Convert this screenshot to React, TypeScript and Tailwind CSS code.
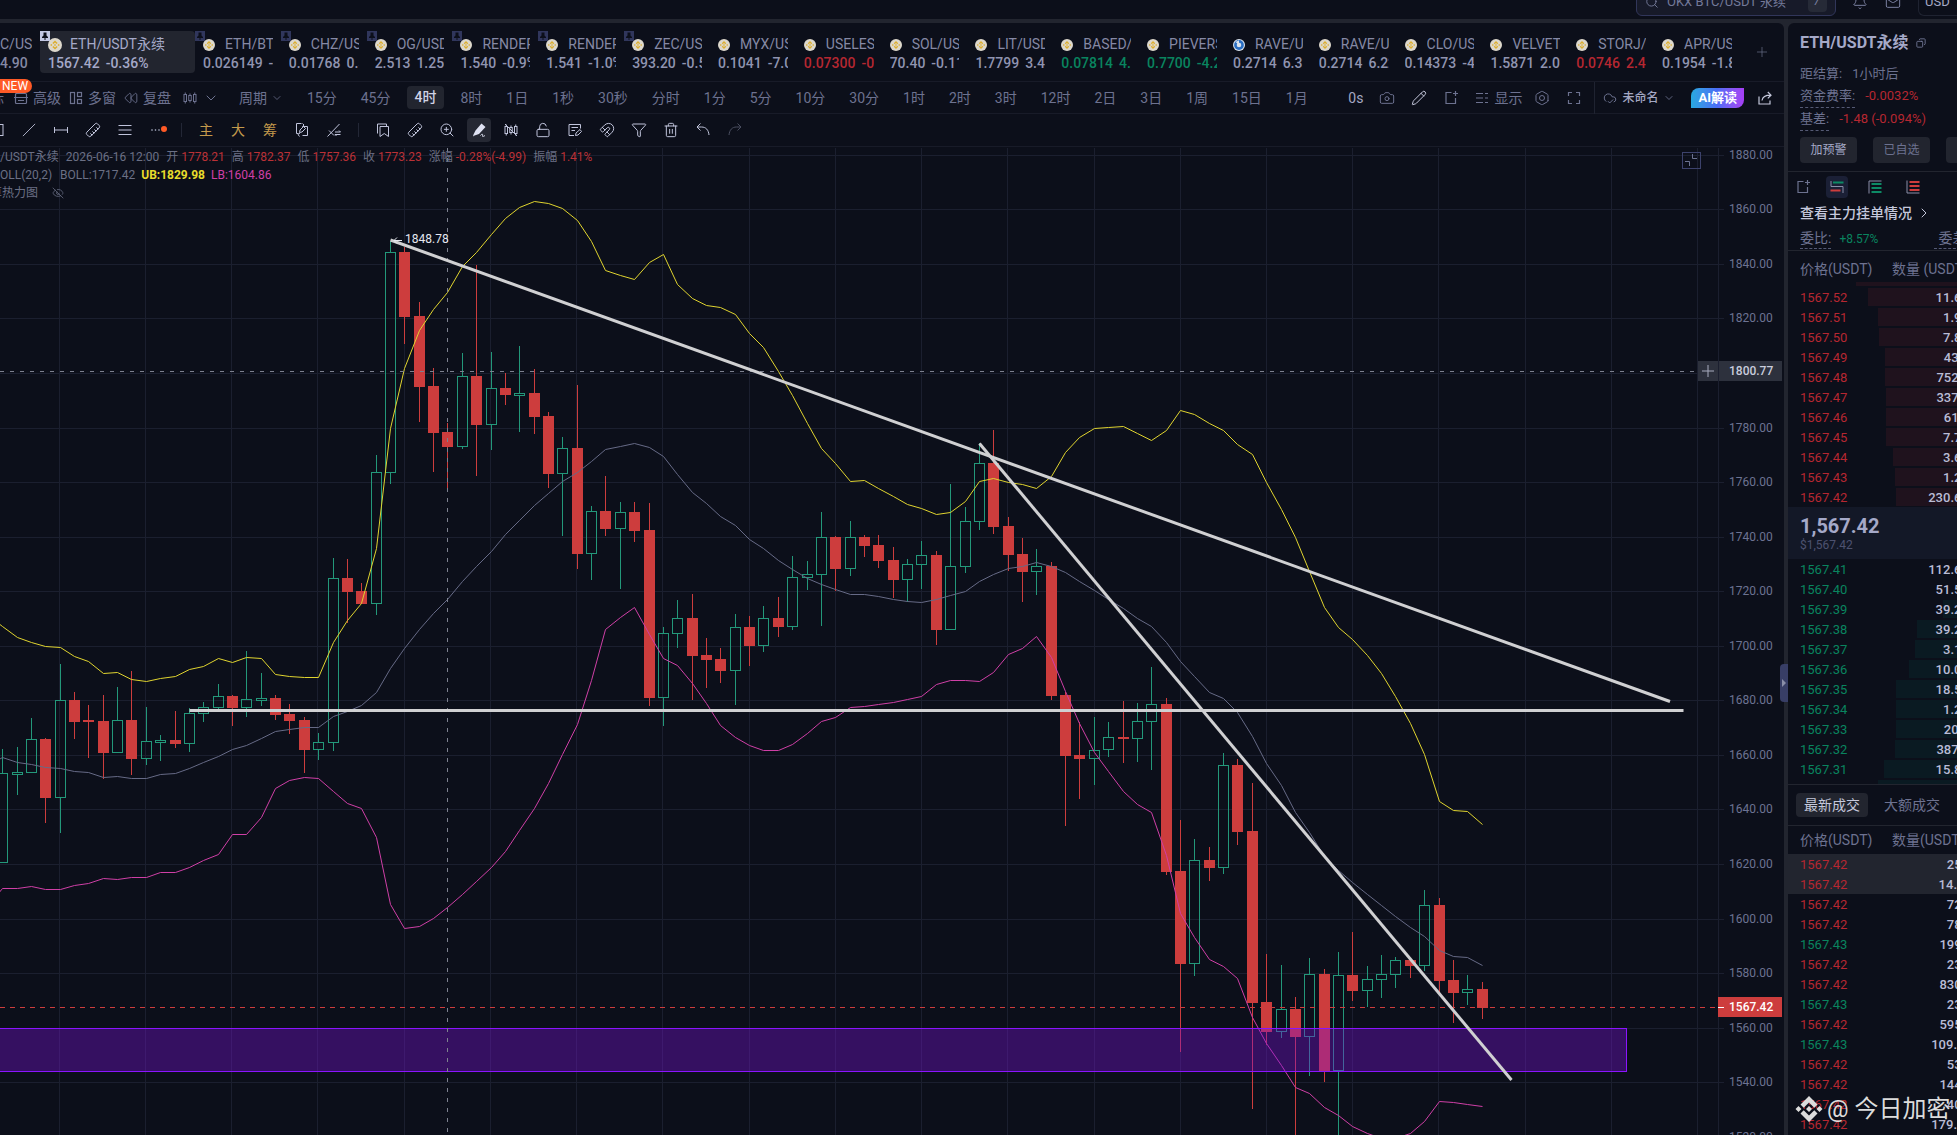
import { useState } from 'react';
import type { ReactNode } from 'react';
import {
  Bell,
  Camera,
  ChevronDown,
  ChevronRight,
  CloudCheck,
  Copy,
  EyeOff,
  Filter,
  Fullscreen,
  Hexagon,
  LockOpen,
  Magnet,
  Mail,
  NotebookPen,
  Pencil,
  Plus,
  Rewind,
  Ruler,
  Search,
  Slash,
  SquarePen,
  Trash2,
  ZoomIn,
} from 'lucide-react';

type Tone = 'up' | 'down' | 'flat';

interface Ticker {
  name: string;
  price: string;
  change: string;
  tone?: Tone;
  pinned?: boolean;
  blue?: boolean;
}

const TICKERS: Ticker[] = [
  { name: 'ETH/BTC', price: '0.026149', change: '-0.2', pinned: true },
  { name: 'CHZ/USDT', price: '0.01768', change: '0.5', pinned: true },
  { name: 'OG/USDT', price: '2.513', change: '1.25%', pinned: true },
  { name: 'RENDER/U', price: '1.540', change: '-0.9%', pinned: true },
  { name: 'RENDER/U', price: '1.541', change: '-1.0%', pinned: true },
  { name: 'ZEC/USDT', price: '393.20', change: '-0.5', pinned: true },
  { name: 'MYX/USDT', price: '0.1041', change: '-7.0' },
  { name: 'USELESS', price: '0.07300', change: '-0', tone: 'down' },
  { name: 'SOL/USDT', price: '70.40', change: '-0.11' },
  { name: 'LIT/USDT', price: '1.7799', change: '3.44' },
  { name: 'BASED/U', price: '0.07814', change: '4.1', tone: 'up' },
  { name: 'PIEVERSE', price: '0.7700', change: '-4.2', tone: 'up' },
  { name: 'RAVE/US', price: '0.2714', change: '6.31', blue: true },
  { name: 'RAVE/US', price: '0.2714', change: '6.22' },
  { name: 'CLO/USDT', price: '0.14373', change: '-4' },
  { name: 'VELVET/U', price: '1.5871', change: '2.05' },
  { name: 'STORJ/US', price: '0.0746', change: '2.40', tone: 'down' },
  { name: 'APR/USDT', price: '0.1954', change: '-1.8' },
];

const PERIODS = [
  '15分', '45分', '4时', '8时', '1日', '1秒', '30秒', '分时', '1分', '5分', '10分', '30分',
  '1时', '2时', '3时', '12时', '2日', '3日', '1周', '15日', '1月',
];

// price, amount, left edge of the depth bar
const ASKS: [string, string, number][] = [
  ['1567.52', '11.65K', 80],
  ['1567.51', '1.92K', 90],
  ['1567.50', '7.84K', 91],
  ['1567.49', '43.89', 97],
  ['1567.48', '752.39', 97],
  ['1567.47', '337.01', 98],
  ['1567.46', '61.13', 98],
  ['1567.45', '7.72K', 98],
  ['1567.44', '3.65K', 105],
  ['1567.43', '1.23K', 107],
  ['1567.42', '230.61K', 108],
];

const BIDS: [string, string, number][] = [
  ['1567.41', '112.60K', 200],
  ['1567.40', '51.53K', 180],
  ['1567.39', '39.21K', 155],
  ['1567.38', '39.27K', 129],
  ['1567.37', '3.13K', 127],
  ['1567.36', '10.03K', 121],
  ['1567.35', '18.51K', 108],
  ['1567.34', '1.25K', 108],
  ['1567.33', '20.38', 108],
  ['1567.32', '387.15', 107],
  ['1567.31', '15.80K', 96],
];

const TRADES: [string, string, Tone][] = [
  ['1567.42', '25.08', 'down'],
  ['1567.42', '14.91K', 'down'],
  ['1567.42', '72.10', 'down'],
  ['1567.42', '78.37', 'down'],
  ['1567.43', '199.06', 'up'],
  ['1567.42', '23.51', 'down'],
  ['1567.42', '830.73', 'down'],
  ['1567.43', '23.51', 'up'],
  ['1567.42', '595.62', 'down'],
  ['1567.43', '109.72K', 'up'],
  ['1567.42', '53.29', 'down'],
  ['1567.42', '144.20', 'down'],
  ['1567.42', '40.75', 'down'],
  ['1567.42', '179.50K', 'down'],
];

const FIRST = -4;
const candleX = (i: number) => Math.floor(60.1 + 14.364 * i) + 0.5;

// [up?, high, body top, body bottom, low], one per 4h bar
const CANDLES: [0 | 1, number, number, number, number][] = [
  [1, 749, 773, 862, 863], [1, 747, 772, 774, 795], [1, 718, 739, 772, 773], [0, 738, 739, 798, 823],
  [1, 664, 700, 797, 833], [0, 692, 700, 722, 739], [0, 705, 720, 722, 758], [0, 695, 721, 753, 779],
  [1, 687, 720, 752, 753], [0, 671, 720, 759, 775], [1, 707, 741, 758, 765], [1, 735, 740, 742, 761],
  [0, 711, 740, 744, 748], [1, 708, 713, 743, 752], [1, 702, 707, 713, 722], [1, 684, 696, 707, 712],
  [0, 695, 696, 708, 726], [1, 651, 699, 707, 717], [1, 673, 698, 700, 706], [0, 695, 698, 715, 720],
  [0, 704, 714, 721, 734], [0, 717, 720, 750, 773], [1, 733, 742, 749, 760], [1, 558, 578, 742, 751],
  [0, 559, 578, 592, 623], [0, 583, 591, 604, 604], [1, 455, 472, 603, 615], [1, 241, 252, 472, 484],
  [0, 247, 252, 317, 344], [0, 302, 316, 387, 422], [0, 368, 386, 433, 472], [0, 423, 432, 447, 492],
  [1, 353, 376, 446, 449], [0, 265, 376, 425, 476], [1, 352, 388, 424, 450], [0, 373, 388, 395, 405],
  [1, 346, 393, 395, 432], [0, 369, 393, 417, 434], [0, 412, 416, 474, 488], [1, 437, 448, 473, 536],
  [0, 385, 448, 554, 569], [1, 506, 511, 553, 580], [0, 476, 511, 529, 536], [1, 502, 512, 528, 589],
  [0, 502, 512, 531, 542], [0, 503, 530, 698, 706], [1, 627, 633, 697, 726], [1, 600, 618, 633, 648],
  [0, 594, 618, 656, 700], [0, 638, 655, 660, 688], [0, 648, 659, 671, 683], [1, 614, 627, 670, 705],
  [0, 616, 627, 646, 666], [1, 606, 618, 645, 652], [0, 597, 618, 627, 637], [1, 556, 577, 626, 630],
  [1, 561, 574, 577, 590], [1, 512, 537, 574, 626], [0, 536, 537, 569, 591], [1, 521, 537, 568, 576],
  [0, 535, 537, 546, 557], [0, 535, 545, 561, 568], [0, 547, 560, 580, 598], [1, 559, 564, 579, 602],
  [1, 541, 555, 564, 589], [0, 551, 555, 630, 645], [1, 484, 566, 629, 630], [1, 507, 521, 566, 573],
  [1, 443, 463, 521, 530], [0, 430, 463, 527, 534], [0, 517, 526, 555, 571], [0, 538, 554, 572, 602],
  [1, 549, 566, 571, 595], [0, 562, 566, 696, 700], [0, 692, 695, 756, 826], [0, 722, 755, 759, 799],
  [1, 717, 750, 758, 785], [1, 722, 737, 749, 757], [0, 701, 737, 739, 763], [1, 703, 721, 738, 762],
  [1, 667, 704, 721, 770], [0, 698, 704, 872, 875], [0, 820, 871, 964, 1052], [1, 839, 860, 963, 976],
  [0, 847, 860, 868, 881], [1, 753, 765, 867, 874], [0, 759, 765, 832, 845], [0, 783, 831, 1003, 1109],
  [0, 954, 1002, 1032, 1045], [1, 965, 1009, 1031, 1038], [0, 997, 1009, 1037, 1140], [1, 958, 974, 1036, 1076],
  [0, 969, 974, 1071, 1082], [1, 952, 975, 1070, 1140], [0, 932, 975, 991, 1001], [1, 966, 979, 990, 1007],
  [1, 955, 974, 979, 998], [1, 957, 960, 974, 988], [0, 960, 960, 966, 978], [1, 890, 905, 965, 971],
  [0, 898, 905, 981, 992], [0, 960, 980, 993, 1023], [1, 975, 989, 992, 1005], [0, 982, 989, 1008, 1019],
];

// Bollinger bands, starting one bar before the first candle
const UPPER = [
  615, 626, 637, 642, 646, 647, 656, 661, 673, 672, 679, 681, 678, 676, 669, 666, 658, 662, 657, 658, 674, 676,
  677, 677, 642, 620, 603, 548, 428, 368, 330, 309, 292, 266, 252, 234, 218, 207, 201, 203, 208, 220, 241, 270,
  275, 279, 262, 254, 284, 298, 305, 307, 314, 333, 347, 371, 395, 423, 448, 463, 481, 480, 488, 496, 504, 508,
  514, 512, 501, 481, 478, 482, 484, 488, 476, 452, 437, 428, 427, 426, 433, 440, 430, 410, 414, 423, 430, 444,
  454, 482, 509, 537, 571, 607, 627, 639, 655, 673, 696, 723, 754, 801, 810, 811, 824,
];
const MIDDLE = [
  765, 757, 762, 764, 767, 768, 771, 772, 777, 776, 778, 778, 774, 773, 768, 762, 756, 749, 745, 738, 731, 729,
  727, 727, 716, 711, 705, 692, 668, 648, 629, 613, 599, 581, 566, 551, 534, 520, 505, 493, 481, 472, 461, 449,
  446, 443, 447, 456, 474, 492, 503, 516, 525, 539, 548, 560, 569, 578, 584, 589, 594, 594, 596, 599, 601, 602,
  599, 595, 591, 581, 574, 568, 566, 562, 566, 572, 581, 590, 599, 608, 618, 626, 642, 661, 676, 692, 698, 712,
  736, 763, 785, 812, 832, 856, 870, 882, 894, 905, 916, 927, 936, 950, 956, 957, 965,
];
const LOWER = [
  905, 888, 888, 886, 889, 889, 885, 883, 878, 879, 877, 877, 872, 872, 867, 860, 854, 834, 834, 817, 788, 780,
  777, 778, 791, 803, 808, 837, 904, 928, 926, 918, 907, 894, 881, 867, 851, 830, 808, 783, 754, 724, 680, 629,
  617, 607, 634, 658, 665, 683, 703, 725, 737, 745, 750, 750, 744, 733, 721, 717, 707, 706, 704, 702, 699, 696,
  684, 680, 680, 681, 672, 654, 648, 636, 657, 691, 723, 752, 771, 791, 804, 812, 855, 913, 937, 959, 966, 978,
  1017, 1043, 1065, 1087, 1093, 1107, 1115, 1126, 1133, 1138, 1138, 1133, 1121, 1101, 1102, 1104, 1106,
];

const toPoints = (ys: number[]) =>
  ys.map((y, i) => `${candleX(FIRST - 1 + i)},${y + 0.5}`).join(' ');

const GRID_X = Array.from({ length: 20 }, (_, i) => Math.floor(59.3 + 86.23 * i) + 0.5);
const GRID_Y = Array.from({ length: 19 }, (_, i) => ({
  y: Math.floor(155.3 + 54.55 * i) + 0.5,
  label: (1880 - 20 * i).toFixed(2),
}));

function toneClass(tone: Tone = 'flat') {
  if (tone === 'up') return 'text-[#09845f]';
  if (tone === 'down') return 'text-[#b62731]';
  return 'text-[#9094b0]';
}

function Coin({ blue, size }: { blue?: boolean; size: string }) {
  if (blue) {
    return (
      <svg viewBox="0 0 14 14" className={size}>
        <circle cx="7" cy="7" r="7" fill="#d9e2ee" />
        <circle cx="7" cy="7" r="4.2" fill="none" stroke="#2a6fc4" strokeWidth="3" />
        <path d="M7 7V1.5L3 3.500z" fill="#d9e2ee" />
      </svg>
    );
  }
  return (
    <svg viewBox="0 0 14 14" className={size}>
      <circle cx="7" cy="7" r="7" fill="#ddd8cc" />
      <path d="M7 2.4 9.6 5 8.5 6.1 7 4.6 5.5 6.1 4.4 5z" fill="#dcae2e" />
      <path d="M7 11.6 9.6 9 8.5 7.9 7 9.4 5.5 7.9 4.4 9z" fill="#dcae2e" />
      <path d="M7 5.9 8.1 7 7 8.1 5.9 7z M3.3 5.9 4.4 7 3.3 8.1 2.2 7z M10.7 5.9 11.8 7 10.7 8.1 9.6 7z" fill="#dcae2e" />
    </svg>
  );
}

function Pin({ active }: { active?: boolean }) {
  return (
    <svg viewBox="0 0 10 10" className="absolute left-0 top-0 size-2.5">
      <rect width="10" height="10" fill={active ? '#c3c8e4' : '#30365c'} />
      <path d="M3.500 1.500h3v3l1.500 1.500v1H5.500V9h-1V7H2V6l1.500-1.500z" fill="#0c0f1a" />
    </svg>
  );
}

function CandlesIcon({ crossed }: { crossed?: boolean }) {
  return (
    <svg viewBox="0 0 14 14" className="size-3.5" fill="none" stroke="currentColor">
      <rect x="1" y="3.500" width="2.500" height="7" />
      <rect x="5.750" y="4.500" width="2.500" height="5" />
      <rect x="10.500" y="3.500" width="2.500" height="7" />
      <path d="M2.250 1.500v2M2.250 10.500v2M7 2.500v2M7 9.500v2M11.750 1.500v2M11.750 10.500v2" />
      {crossed && <path d="M1 1l12 12" />}
    </svg>
  );
}

function PopOutIcon() {
  return (
    <svg viewBox="0 0 16 16" className="size-4" fill="none" stroke="currentColor" strokeWidth="1.200">
      <path d="M8.500 2.500H3v11h9.500V8M12.500 1v5M10 3.500h5" />
    </svg>
  );
}

function ToolButton({ label, active, children }: { label: string; active?: boolean; children: ReactNode }) {
  return (
    <button
      aria-label={label}
      className={`flex size-6 shrink-0 items-center justify-center rounded text-sm ${
        active ? 'bg-[#252833] text-[#dfe2f2]' : ''
      }`}
    >
      {children}
    </button>
  );
}

function Header() {
  return (
    <header className="flex h-[19px] shrink-0 items-end justify-end overflow-hidden bg-[#0c0f1a] pb-[3px] text-[13px] text-[#7a80a0]">
      <label className="flex h-7 w-[200px] items-center gap-2 rounded-md border border-[#31365a] bg-[#171a29] px-2">
        <Search className="size-3.5 shrink-0" strokeWidth={1.5} />
        <input
          aria-label="搜索"
          placeholder="OKX BTC/USDT 永续"
          className="min-w-0 flex-1 bg-transparent outline-none placeholder:text-[#737999]"
        />
        <kbd className="rounded-sm bg-[#262a37] px-1.5 text-xs leading-5">/</kbd>
      </label>
      <button aria-label="通知" className="flex h-7 w-12 items-center justify-center">
        <Bell className="size-4" strokeWidth={1.5} />
      </button>
      <button aria-label="消息" className="flex h-7 w-[18px] items-center justify-center">
        <Mail className="size-4" strokeWidth={1.5} />
      </button>
      <button className="ml-4 h-7 w-[39px] rounded-l-md border border-r-0 border-[#1f2331] pl-1.5 text-left text-[#a4a8c4]">
        USD
      </button>
    </header>
  );
}

function TickerTabs() {
  return (
    <nav className="flex h-[59px] shrink-0 items-center border-b border-[#181b28] text-sm leading-[19px] whitespace-nowrap">
      <button className="flex h-[42px] w-10 shrink-0 flex-col justify-end overflow-hidden pr-2 text-left text-[#8589a5]">
        <span className="w-full overflow-hidden">C/USDT</span>
        <span className="flex w-full gap-1.5 overflow-hidden font-medium">
          <span>4.90</span>
          <span>-0.8</span>
        </span>
      </button>
      <button className="relative flex h-[42px] w-[155px] shrink-0 flex-col justify-end rounded bg-[#22252f] px-2 text-left text-[#a5a9c8]">
        <Pin active />
        <span className="flex items-center gap-2">
          <Coin size="size-3.5" />
          ETH/USDT永续
        </span>
        <span className="flex gap-1.5 font-medium">
          <span>1567.42</span>
          <span>-0.36%</span>
        </span>
      </button>
      <div className="flex min-w-0 flex-1">
        {TICKERS.map((t, i) => (
          <button key={i} className="relative flex h-[42px] min-w-0 flex-1 flex-col justify-end px-2 text-left">
            {t.pinned && <Pin />}
            <span className="flex w-full items-center gap-2.5 overflow-hidden text-[#8589a5]">
              <Coin size="size-3 shrink-0" blue={t.blue} />
              <span className="overflow-hidden">{t.name}</span>
            </span>
            <span className={`flex w-full gap-1.5 overflow-hidden font-medium ${toneClass(t.tone)}`}>
              <span>{t.price}</span>
              <span>{t.change}</span>
            </span>
          </button>
        ))}
      </div>
      <button aria-label="添加" className="flex w-11 shrink-0 justify-center text-[#6d7290]">
        <Plus className="size-4" strokeWidth={1} />
      </button>
    </nav>
  );
}

function PeriodBar() {
  const [period, setPeriod] = useState('4时');

  return (
    <div className="relative flex h-8 shrink-0 items-center border-b border-[#181b28] text-sm whitespace-nowrap text-[#6d7290]">
      <span className="absolute -top-[3px] left-0 rounded-r-full rounded-tl-lg bg-[#ff5a26] pl-0.5 pr-1 text-xs leading-[14px] text-white">
        NEW
      </span>
      <span className="mr-2.5 flex w-1 justify-end overflow-hidden">标</span>
      <button className="mr-2 flex items-center gap-[5px]">
        <svg viewBox="0 0 14 14" className="size-3.5" fill="none" stroke="currentColor" strokeWidth="1.200">
          <rect x="1.500" y="2.500" width="11" height="10" rx="1" />
          <path d="M0 6.500h14M4 .5v2M10 .5v2M4 9.500h6" />
        </svg>
        高级
      </button>
      <button className="mr-2 flex items-center gap-[5px]">
        <svg viewBox="0 0 14 14" className="size-3.5" fill="none" stroke="currentColor" strokeWidth="1.200">
          <rect x="1.500" y="1.500" width="4" height="11" />
          <rect x="8.500" y="1.500" width="4" height="4" />
          <rect x="8.500" y="8.500" width="4" height="4" />
        </svg>
        多窗
      </button>
      <button className="mr-3 flex items-center gap-[5px]">
        <Rewind className="size-3.5" strokeWidth={1.5} />
        复盘
      </button>
      <button aria-label="图表类型" className="mr-5 flex items-center gap-1.5">
        <CandlesIcon />
        <ChevronDown className="size-4" strokeWidth={1.5} />
      </button>
      <button className="mr-3 flex items-center gap-1">
        周期
        <ChevronDown className="size-3" strokeWidth={1.5} />
      </button>
      {PERIODS.map((p) => (
        <button
          key={p}
          onClick={() => setPeriod(p)}
          className={p === period ? 'mx-1 rounded bg-[#22252f] px-2 leading-[23px] font-medium text-[#d0d3e6]' : 'px-3'}
        >
          {p}
        </button>
      ))}
      <div className="ml-auto flex items-center gap-4 pr-3">
        <span className="text-[#a4a8c4]">0s</span>
        <button aria-label="截图"><Camera className="size-4" strokeWidth={1.5} /></button>
        <button aria-label="画线" className="text-[#c5c8dc]"><Pencil className="size-4" strokeWidth={1.5} /></button>
        <button aria-label="新窗口"><PopOutIcon /></button>
        <button className="-mr-1 flex items-center gap-[5px]">
          <svg viewBox="0 0 14 14" className="size-3.5" stroke="currentColor" strokeWidth="1.200">
            <path d="M1 2.500h7M1 7h7M1 11.500h7M10 2.500h3M10 7h3M10 11.500h3" />
          </svg>
          显示
        </button>
        <button aria-label="设置" className="relative">
          <Hexagon className="size-4" strokeWidth={1.5} />
          <span className="absolute inset-0 m-auto size-1.5 rounded-full border border-current" />
        </button>
        <button aria-label="全屏">
          <svg viewBox="0 0 16 16" className="size-4" fill="none" stroke="currentColor" strokeWidth="1.200">
            <path d="M2.500 6V2.500H6M10 2.500h3.500V6M13.500 10v3.500H10M6 13.500H2.500V10" />
          </svg>
        </button>
        <div className="-ml-1 flex h-8 items-center border-l border-[#1f2331] pl-2">
          <button className="flex items-center gap-[5px] text-xs font-medium text-[#a4a8c4]">
            <CloudCheck className="size-3.5 text-[#7a80a0]" strokeWidth={1.5} />
            未命名
            <ChevronDown className="size-3 text-[#7a80a0]" strokeWidth={1.5} />
          </button>
        </div>
        <button className="rounded-tl-lg rounded-br-lg bg-linear-to-r from-[#27a9e0] via-[#4a6cf5] to-[#a63df5] px-[7px] text-[13px] leading-5 font-bold text-white">
          AI解读
        </button>
        <button aria-label="分享" className="-ml-0.5 text-[#c5c8dc]">
          <svg viewBox="0 0 14 14" className="size-3.5" fill="none" stroke="currentColor" strokeWidth="1.200">
            <path d="M1 5.500v7.500h11V9.500M4 9.500C4.500 6 7 4.200 12.500 4.200M9.800 1l3.200 3.200-3.200 3.200" />
          </svg>
        </button>
      </div>
    </div>
  );
}

function DrawBar() {
  return (
    <div className="flex h-[33px] shrink-0 items-center gap-2 border-b border-[#181b28] text-[#c0c4db]">
      <div className="-ml-[15px]">
        <ToolButton label="矩形">
          <svg viewBox="0 0 16 16" className="size-4" fill="none" stroke="currentColor">
            <rect x="2" y="2.500" width="12" height="11" />
          </svg>
        </ToolButton>
      </div>
      <ToolButton label="线段"><Slash className="size-3.5" strokeWidth={1.5} /></ToolButton>
      <ToolButton label="水平线">
        <svg viewBox="0 0 16 16" className="size-4" fill="none" stroke="currentColor">
          <path d="M1.500 5v6M14.500 5v6M1.500 8h13" />
        </svg>
      </ToolButton>
      <ToolButton label="尺子"><Ruler className="size-4 rotate-90" strokeWidth={1.5} /></ToolButton>
      <ToolButton label="斐波那契">
        <svg viewBox="0 0 16 16" className="size-4" fill="none" stroke="currentColor">
          <path d="M1.500 3.500h13M1.500 8h13M1.500 12.500h13" />
        </svg>
      </ToolButton>
      <ToolButton label="更多">
        <svg viewBox="0 0 20 16" className="h-4 w-5" fill="currentColor">
          <circle cx="5" cy="8" r=".8" />
          <circle cx="8.500" cy="8" r=".8" />
          <circle cx="12" cy="8" r=".8" />
          <circle cx="17" cy="7" r="3" fill="#ff5a26" />
        </svg>
      </ToolButton>
      <span className="mx-1 h-3.5 w-px bg-[#232736]" />
      <div className="flex gap-2 text-[#c49a4c]">
        <ToolButton label="主">主</ToolButton>
        <ToolButton label="大">大</ToolButton>
        <ToolButton label="筹">筹</ToolButton>
      </div>
      <ToolButton label="同步">
        <svg viewBox="0 0 16 16" className="size-4" fill="none" stroke="currentColor">
          <path d="M7.500 1.500h-5v10h2M5.500 14.500l-1.500-2 2-1.500M8.500 4.500h5v9h-5M8.500 1.500l1.500 1.500-1.500 1.500" />
          <path d="M5.500 10.500l.5-2.500 3.500-3.500 2 2L8 10z" />
        </svg>
      </ToolButton>
      <ToolButton label="画线设置">
        <svg viewBox="0 0 16 16" className="size-4" fill="none" stroke="currentColor">
          <path d="M1.500 14.500 13.500 2M3 8.500l5 5M9 10h5.500l-1.500-1.500M14.500 12.500H9l1.500 1.500" />
        </svg>
      </ToolButton>
      <span className="mx-1 h-3.5 w-px bg-[#232736]" />
      <ToolButton label="收藏">
        <svg viewBox="0 0 16 16" className="size-4" fill="none" stroke="currentColor">
          <path d="M2.500 11.500v-9.500h9v2" />
          <path d="M5 4.500h8.500v10L9.250 11.500 5 14.500z" />
        </svg>
      </ToolButton>
      <ToolButton label="测量"><Ruler className="size-4 rotate-90" strokeWidth={1.5} /></ToolButton>
      <ToolButton label="放大"><ZoomIn className="size-4" strokeWidth={1.5} /></ToolButton>
      <ToolButton label="连续画线" active>
        <svg viewBox="0 0 16 16" className="size-4" fill="currentColor">
          <path d="M10.500 1.500l4 3.500-6.500 7-4.500 1.500-1.500 1 .5-2L4.500 8.500z" />
          <path d="M9.500 13.500c1.500-2 2.500-1.500 2 0s1 1 2.500 0" fill="none" stroke="currentColor" />
        </svg>
      </ToolButton>
      <ToolButton label="隐藏K线"><CandlesIcon crossed /></ToolButton>
      <ToolButton label="锁定"><LockOpen className="size-4" strokeWidth={1.5} /></ToolButton>
      <ToolButton label="笔记">
        <svg viewBox="0 0 16 16" className="size-4" fill="none" stroke="currentColor">
          <path d="M7 13.500H2V2.500h11.500v4M4.500 5.500h6.500M4.500 8.500h3.500" />
          <path d="M8.500 13.500l.5-2.500 4-3.500 1.500 2-3.500 3.500z" />
        </svg>
      </ToolButton>
      <ToolButton label="磁吸"><Magnet className="size-4" strokeWidth={1.5} /></ToolButton>
      <ToolButton label="筛选"><Filter className="size-4" strokeWidth={1.5} /></ToolButton>
      <ToolButton label="删除"><Trash2 className="size-4" strokeWidth={1.5} /></ToolButton>
      <ToolButton label="撤销">
        <svg viewBox="0 0 16 16" className="size-4" fill="none" stroke="currentColor">
          <path d="M5.500 1.500 2 5l3.500 3.500M2 5h4.500c4.500 0 7 3 7.500 8" />
        </svg>
      </ToolButton>
      <span className="text-[#4a4e60]">
        <ToolButton label="重做">
          <svg viewBox="0 0 16 16" className="size-4" fill="none" stroke="currentColor">
            <path d="M10.500 1.500 14 5l-3.500 3.500M14 5H9.500C5 5 2.500 8 2 13" />
          </svg>
        </ToolButton>
      </span>
    </div>
  );
}

function Candle({ index, bar }: { index: number; bar: (typeof CANDLES)[number] }) {
  const [up, high, top, bottom, low] = bar;
  const x = candleX(index);
  if (!up) {
    return (
      <g fill="#cd3d3d" stroke="none">
        <rect x={x - 0.5} y={high} width="1" height={low - high} />
        <rect x={x - 5.5} y={top} width="11" height={bottom - top} />
      </g>
    );
  }
  return (
    <g fill="none" stroke="#23987a">
      <path d={`M${x} ${high}V${top}M${x} ${bottom}V${low}`} />
      <rect x={x - 5} y={top + 0.5} width="10" height={bottom - top} />
    </g>
  );
}

function Chart() {
  return (
    <div className="relative min-h-0 flex-1 overflow-hidden">
      <svg
        viewBox="0 147 1784 988"
        preserveAspectRatio="xMaxYMin slice"
        className="h-full w-full font-['Roboto','Noto_Sans_CJK_SC',sans-serif]"
      >
        <g stroke="#1b1f2f">
          {GRID_X.map((x) => (
            <path key={x} d={`M${x} 148V1135`} />
          ))}
          {GRID_Y.map(({ y }) => (
            <path key={y} d={`M0 ${y}H1724`} />
          ))}
          <path d="M1718.500 148V1135" />
        </g>
        <g fontSize="12" fill="#6c7392">
          {GRID_Y.map(({ y, label }) => label !== '1800.00' && (
            <text key={label} x="1729" y={y + 3.5}>{label}</text>
          ))}
        </g>

        {CANDLES.map((bar, i) => (
          <Candle key={i} index={FIRST + i} bar={bar} />
        ))}

        <g fill="none">
          <polyline points={toPoints(MIDDLE)} stroke="#666a86" />
          <polyline points={toPoints(UPPER)} stroke="#e0d42f" />
          <polyline points={toPoints(LOWER)} stroke="#cf3fa6" />
        </g>

        <rect x="-2" y="1028.500" width="1628.500" height="43" fill="#7a12d6" fillOpacity="0.380" stroke="#8b14ff" />

        <path d="M0 1007.500H1718" stroke="#cd3d3d" strokeDasharray="5 5" />
        <path d="M0 371.500H1698M447.500 148V1135" stroke="#7d818f" strokeDasharray="4 6" />

        <g stroke="#d0d0d2" strokeWidth="3">
          <path d="M390.500 240 1670 701.500" />
          <path d="M189.500 710.500H1683.500" />
          <path d="M979.500 443.500 1511.500 1080" />
        </g>
        <path d="M402 240.500h-8l3-3m-3 3 3 3" fill="none" stroke="#e6e8f0" />
        <text x="405" y="243" fontSize="12" fill="#e6e8f0">1848.78</text>

        <rect x="1698" y="361" width="84" height="20" fill="#2d313d" />
        <path d="M1718.500 361v20" stroke="#1b1f2f" />
        <path d="M1702 371h12M1708 365v12" stroke="#a9adc0" />
        <text x="1729" y="375" fontSize="12" fontWeight="500" fill="#c9ccdc">1800.77</text>

        <rect x="1718" y="997" width="64" height="20" fill="#cd3d3d" />
        <path d="M1718 1007.500h6" stroke="#fff" />
        <text x="1729" y="1011" fontSize="12" fontWeight="500" fill="#fff">1567.42</text>

        <g fill="none" stroke="#3c426c">
          <rect x="1682.500" y="152.500" width="18" height="16" />
          <path d="M1692.500 154v4.500h4.500M1685 161.500h4.500v4.500" stroke="#6c7392" />
        </g>
      </svg>

      <div className="absolute left-0 top-0 pt-px text-xs leading-[18px] whitespace-nowrap text-[#6b7085]">
        <p className="flex gap-[7px]">
          <span>/USDT永续</span>
          <span>2026-06-16 12:00</span>
          <span>开 <b className="font-normal text-[#bb3136]">1778.21</b></span>
          <span>高 <b className="font-normal text-[#bb3136]">1782.37</b></span>
          <span>低 <b className="font-normal text-[#bb3136]">1757.36</b></span>
          <span>收 <b className="font-normal text-[#bb3136]">1773.23</b></span>
          <span>涨幅 <b className="font-normal text-[#bb3136]">-0.28%(-4.99)</b></span>
          <span>振幅 <b className="font-normal text-[#bb3136]">1.41%</b></span>
        </p>
        <p className="flex gap-1.5">
          <span className="mr-0.5">OLL(20,2)</span>
          <span>BOLL:1717.42</span>
          <span className="font-bold text-[#e8dc2c]">UB:1829.98</span>
          <span className="text-[#cf3fa6]">LB:1604.86</span>
        </p>
        <p className="-ml-2.5 flex items-center gap-3.5">
          <span>算热力图</span>
          <EyeOff className="size-3" strokeWidth={1.5} />
        </p>
      </div>
    </div>
  );
}

function BookRows({ rows, tone }: { rows: [string, string, number][]; tone: Tone }) {
  return (
    <table className="w-[300px] table-fixed border-collapse text-[13px] leading-5">
      <tbody>
        {rows.map(([price, amount, left]) => (
          <tr key={price} className="relative block h-5">
            <td
              aria-hidden
              className={`absolute inset-y-px right-0 ${tone === 'down' ? 'bg-[#1f121d]' : 'bg-[#0a1a22]'}`}
              style={{ left }}
            />
            <td className={`relative inline-block w-[90px] pl-3 ${toneClass(tone)}`}>{price}</td>
            <td className="relative inline-block w-[99px] text-right font-medium text-[#b9bcd6]">{amount}</td>
          </tr>
        ))}
      </tbody>
    </table>
  );
}

function SidePanel() {
  return (
    <aside className="relative flex w-[169px] shrink-0 flex-col overflow-hidden rounded-tl-md bg-[#0c0f1a] whitespace-nowrap text-[#6d7290]">
      <div className="shrink-0 pl-3">
        <h1 className="mt-2 flex items-center gap-[7px] text-base leading-6 font-bold text-[#a5a9c8]">
          ETH/USDT永续
          <Copy className="size-2.5 -scale-x-100 text-[#7a80a0]" strokeWidth={2} />
        </h1>
        <dl className="mt-2 text-[13px] leading-[22px]">
          <div className="flex gap-2.5">
            <dt>距结算:</dt>
            <dd>1小时后</dd>
          </div>
          <div className="flex gap-2.5">
            <dt className="border-b border-dashed border-[#555a75]">资金费率:</dt>
            <dd className="text-[#b62731]">-0.0032%</dd>
          </div>
          <div className="flex gap-2.5">
            <dt className="border-b border-dashed border-[#555a75]">基差:</dt>
            <dd className="text-[#b62731]">-1.48 (-0.094%)</dd>
          </div>
        </dl>
        <div className="mt-1.5 flex gap-4 text-xs leading-[26px]">
          <button className="w-[57px] shrink-0 rounded bg-[#22252f] text-[#a5a9c8]">加预警</button>
          <button className="w-[57px] shrink-0 rounded bg-[#22252f]">已自选</button>
          <button className="w-[57px] shrink-0 rounded bg-[#22252f]">分享</button>
        </div>
      </div>

      <div className="mt-2 shrink-0 border-t border-[#22252f]">
        <div className="mt-1 flex items-center gap-4 pl-1">
          <button aria-label="弹出" className="flex size-[22px] items-center justify-center">
            <PopOutIcon />
          </button>
          <button aria-label="买卖盘" className="-ml-1 flex size-[22px] items-center justify-center rounded bg-[#1b2036]">
            <svg viewBox="0 0 14 14" className="size-3.5" fill="none">
              <path d="M3 2.500h10.500" stroke="#0d8a65" strokeWidth="2" />
              <path d="M.5 10.500h10" stroke="#cd3d3d" strokeWidth="2" />
              <path d="M1 1v5.500h12v6.500" stroke="#8a8ea8" />
            </svg>
          </button>
          <button aria-label="买盘" className="flex size-[22px] items-center justify-center">
            <svg viewBox="0 0 14 14" className="size-3.5" fill="none">
              <path d="M3.500 4h10M3.500 8h10M3.500 12h10" stroke="#0d8a65" strokeWidth="2" />
              <path d="M1 13.500V1h12.500" stroke="#8a8ea8" />
            </svg>
          </button>
          <button aria-label="卖盘" className="flex size-[22px] items-center justify-center">
            <svg viewBox="0 0 14 14" className="size-3.5" fill="none">
              <path d="M3.500 2h10M3.500 6h10M3.500 10h10" stroke="#cd3d3d" strokeWidth="2" />
              <path d="M1 .5V13h12.500" stroke="#8a8ea8" />
            </svg>
          </button>
        </div>
        <a href="#orders" className="mt-1 flex items-center gap-1 pl-3 text-sm leading-[22px] font-medium text-[#c5c8dc]">
          查看主力挂单情况
          <ChevronRight className="size-4" strokeWidth={1.5} />
        </a>
        <div className="mt-[3px] flex h-[23px] items-center gap-2 pl-3 text-sm">
          <span className="border-b border-dashed border-[#555a75]">委比:</span>
          <span className="text-xs text-[#09845f]">+8.57%</span>
          <span className="ml-12 border-b border-dashed border-[#555a75] pl-1">委差:</span>
        </div>
      </div>

      <section className="shrink-0 border-t border-[#22252f]">
        <div className="flex h-[31px] w-[300px] items-center pt-1 pl-3 text-sm">
          <span className="w-[92px]">价格(USDT)</span>
          <span>数量 (USDT)</span>
        </div>
        <div className="mb-px ml-[68px] h-1 bg-[#1f121d]" />
        <BookRows rows={ASKS} tone="down" />
        <div className="h-[52px] bg-[#131827] pt-1.5 pl-3">
          <p className="text-xl leading-[26px] font-bold text-[#a5a9c8]">1,567.42</p>
          <p className="text-xs leading-3 text-[#4d5270]">$1,567.42</p>
        </div>
        <BookRows rows={BIDS} tone="up" />
        <div className="mt-px ml-[90px] h-1 bg-[#0a1a22]" />
      </section>

      <section className="shrink-0 border-t border-[#22252f]">
        <div className="flex h-10 items-center gap-2 pl-2 text-sm leading-6">
          <button className="w-[72px] shrink-0 rounded bg-[#22252f] text-[#c5c8dc]">最新成交</button>
          <button className="w-[72px] shrink-0">大额成交</button>
        </div>
        <table className="w-[300px] border-collapse border-t border-[#22252f] text-[13px] leading-5">
          <thead>
            <tr className="block h-7 text-sm leading-[26px]">
              <th className="inline-block w-[104px] pl-3 text-left font-normal">价格(USDT)</th>
              <th className="inline-block font-normal">数量(USDT)</th>
            </tr>
          </thead>
          <tbody>
            {TRADES.map(([price, amount, tone], i) => (
              <tr key={i} className={`block h-5 ${i < 2 ? 'bg-[#22252f]' : ''}`}>
                <td className={`inline-block w-[90px] pl-3 ${toneClass(tone)}`}>{price}</td>
                <td className="inline-block w-[102px] text-right font-medium text-[#b9bcd6]">{amount}</td>
              </tr>
            ))}
          </tbody>
        </table>
      </section>

      <div className="absolute bottom-2.5 left-[7px] flex items-center gap-1 text-2xl text-[#dcdcdc]">
        <svg viewBox="0 0 28 28" className="size-7" fill="currentColor">
          <path d="M14 1 22.500 9.500 19.300 12.700 14 7.400 8.700 12.700 5.500 9.500z" />
          <path d="M14 27 22.500 18.500 19.300 15.300 14 20.600 8.700 15.300 5.500 18.500z" />
          <path d="M14 11 17 14 14 17 11 14zM3.500 11 6.500 14 3.500 17 .5 14zM24.500 11l3 3-3 3-3-3z" />
        </svg>
        @ 今日加密
      </div>
    </aside>
  );
}

export default function App() {
  return (
    <div className="flex h-screen flex-col overflow-hidden bg-[#22252f] font-['Roboto','Noto_Sans_CJK_SC',sans-serif]">
      <Header />
      <div className="relative mt-1 flex min-h-0 flex-1 gap-1">
        <main className="flex min-w-0 flex-1 flex-col overflow-hidden rounded-tr-md bg-[#0c0f1a]">
          <TickerTabs />
          <PeriodBar />
          <DrawBar />
          <Chart />
        </main>
        <SidePanel />
        <button
          aria-label="收起"
          className="absolute top-[641px] right-[169px] flex h-[38px] w-2 items-center justify-center rounded-l-sm bg-[#383e66]"
        >
          <svg viewBox="0 0 4 8" className="h-2 w-1" fill="#8a8ea8">
            <path d="M0 0l4 4-4 4z" />
          </svg>
        </button>
      </div>
    </div>
  );
}
